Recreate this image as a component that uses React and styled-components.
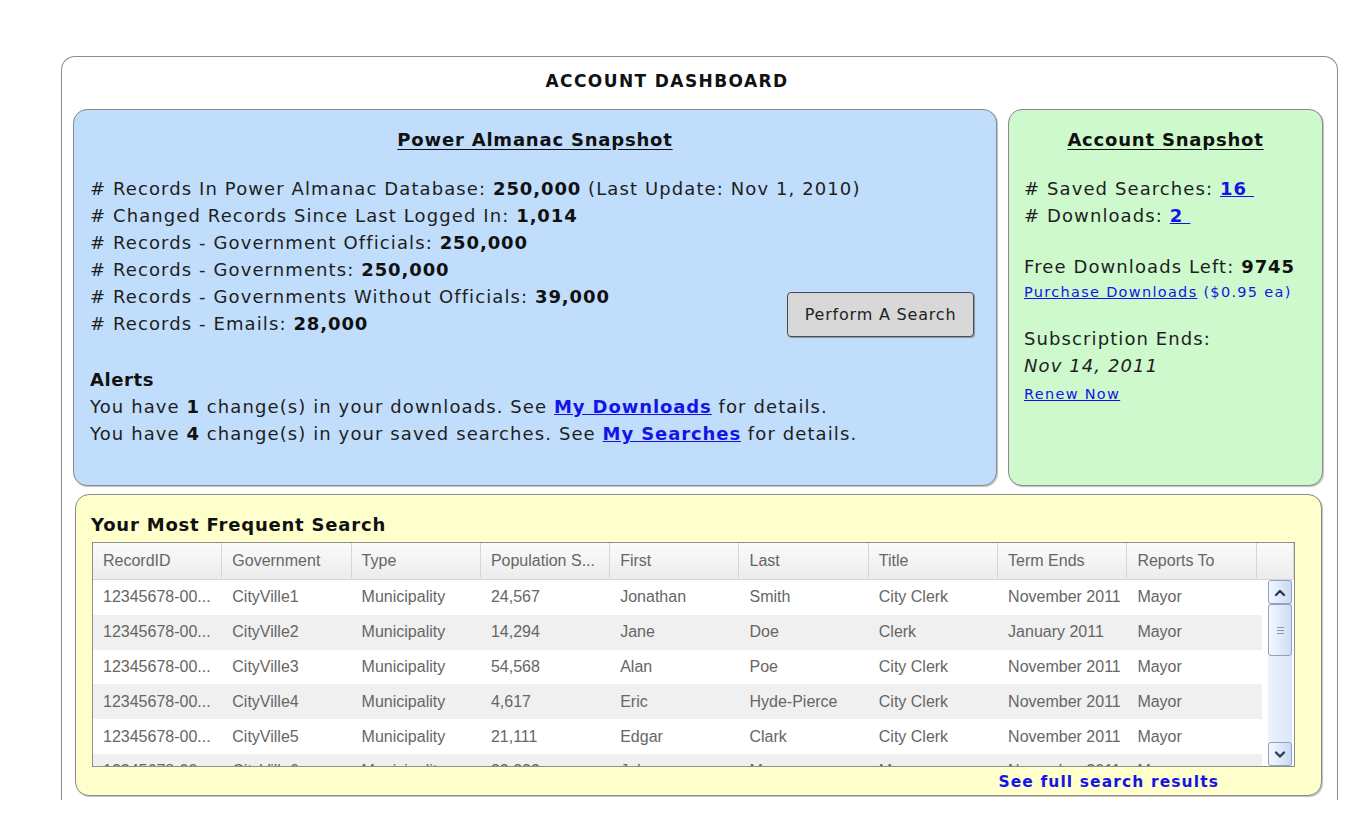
import React from "react";
import styled, { createGlobalStyle } from "styled-components";

const Global = createGlobalStyle`
  html, body { margin: 0; padding: 0; background: #fff; }
  body { font-family: "DejaVu Sans", Verdana, sans-serif; color: #1e1e1e; }
`;

const Page = styled.div`
  padding: 56px 0 0 61px;
  width: 1368px;
  height: 832px;
  box-sizing: border-box;
  overflow: hidden;
`;

const Frame = styled.div`
  width: 1277px;
  height: 744px;
  box-sizing: border-box;
  border: 1px solid #8c8c8c;
  border-bottom: none;
  border-radius: 14px 14px 0 0;
  padding: 0 14px 0 11px;
`;

const Title = styled.h1`
  margin: 0;
  height: 52px;
  padding: 0 62px 4px 0;
  box-sizing: border-box;
  display: flex;
  align-items: center;
  justify-content: center;
  font-size: 17px;
  font-weight: bold;
  letter-spacing: 1.4px;
  color: #111;
`;

const TopRow = styled.div`
  display: grid;
  grid-template-columns: 924px 315px;
  gap: 11px;
`;

const Panel = styled.section`
  box-sizing: border-box;
  height: 377px;
  border: 1px solid #8a8a8a;
  border-radius: 14px;
  background: ${(p) => p.$bg};
  padding: ${(p) => p.$pad};
  box-shadow: 1px 1px 1px rgba(0, 0, 0, 0.25);
`;

const PanelHeading = styled.h2`
  margin: 0 0 22px;
  font-size: 18px;
  line-height: 26px;
  font-weight: bold;
  letter-spacing: 0.8px;
  text-align: center;
  text-decoration: underline;
  text-underline-offset: 3px;
  color: #111;
`;

const Line = styled.div`
  font-size: 18px;
  line-height: 27px;
  letter-spacing: 1.1px;
  white-space: nowrap;
  margin-top: ${(p) => p.$mt || 0}px;
  font-style: ${(p) => (p.$italic ? "italic" : "normal")};
`;

const SmallLine = styled.div`
  font-size: 14.5px;
  line-height: 20px;
  letter-spacing: 1.3px;
  color: #1414e6;
  white-space: nowrap;
  margin-top: ${(p) => p.$mt || 0}px;
`;

const B = styled.b`
  font-weight: bold;
  letter-spacing: 0.9px;
  color: #111;
`;

const Link = styled.a`
  color: #1414e6;
  font-weight: ${(p) => (p.$bold ? "bold" : "normal")};
  letter-spacing: ${(p) => (p.$bold ? "0.9px" : "inherit")};
  text-decoration: underline;
  cursor: pointer;
`;

const StatsRow = styled.div`
  display: flex;
  justify-content: space-between;
  align-items: flex-end;
`;

const SearchButton = styled.button`
  flex-shrink: 0;
  width: 187px;
  height: 45px;
  margin: 0 6px 0 0;
  border: 1px solid #4a4a4a;
  border-radius: 4px;
  background: #d8d8d8;
  font-family: "DejaVu Sans", Verdana, sans-serif;
  font-size: 16px;
  letter-spacing: 0.8px;
  white-space: nowrap;
  color: #222;
  box-shadow: 1px 1px 1px rgba(0, 0, 0, 0.3);
`;

const AlertsTitle = styled.div`
  margin-top: 29px;
  font-size: 18px;
  line-height: 27px;
  font-weight: bold;
  letter-spacing: 0.6px;
  color: #111;
`;

const YellowPanel = styled.section`
  margin: 8px 1px 0 2px;
  box-sizing: border-box;
  height: 302px;
  border: 1px solid #8a8a8a;
  border-radius: 14px;
  background: #ffffcc;
  padding: 18px 26px 2px 16px;
  box-shadow: 1px 1px 1px rgba(0, 0, 0, 0.25);
`;

const SearchHeading = styled.h3`
  margin: 0 0 5px -1px;
  font-size: 18px;
  line-height: 24px;
  font-weight: bold;
  letter-spacing: 0.8px;
  color: #111;
`;

const Grid = styled.div`
  height: 225px;
  box-sizing: border-box;
  border: 1px solid #8e8e8e;
  background: #fff;
  font-family: "Liberation Sans", Arial, sans-serif;
  font-size: 16px;
  color: #666;
  overflow: hidden;
`;

const HeaderRow = styled.div`
  display: grid;
  grid-template-columns: repeat(9, 129.3px) 1fr;
  height: 37px;
  padding-bottom: 1px;
  background: linear-gradient(#fbfbfb, #ececec);
  border-bottom: 1px solid #d4d4d4;
  box-sizing: border-box;
`;

const HeaderCell = styled.div`
  padding-left: 10px;
  display: flex;
  align-items: center;
  border-right: 1px solid #d6d6d6;
  white-space: nowrap;
  overflow: hidden;
`;

const Body = styled.div`
  display: flex;
  height: 186px;
`;

const Rows = styled.div`
  width: 1169px;
  overflow: hidden;
`;

const Row = styled.div`
  display: grid;
  grid-template-columns: repeat(9, 129.3px) 1fr;
  height: 34.8px;
  background: ${(p) => (p.$alt ? "#f0f0f0" : "#fff")};
`;

const Cell = styled.div`
  padding-left: 10px;
  display: flex;
  align-items: center;
  white-space: nowrap;
  overflow: hidden;
`;

const ScrollTrack = styled.div`
  width: 24px;
  margin-left: 6px;
  display: flex;
  flex-direction: column;
  background: linear-gradient(90deg, #eef3fc, #dbe6f7);
`;

const ScrollBtn = styled.div`
  width: 24px;
  height: 24px;
  box-sizing: border-box;
  border: 1px solid #8ea3c4;
  border-radius: 3px;
  background: linear-gradient(90deg, #f4f8ff, #c9d9f2);
  display: flex;
  align-items: center;
  justify-content: center;
`;

const Thumb = styled.div`
  height: 52px;
  box-sizing: border-box;
  border: 1px solid #8ea3c4;
  border-radius: 3px;
  background: linear-gradient(90deg, #f4f8ff, #cfdcf3);
  display: flex;
  align-items: center;
  justify-content: center;
`;

const TrackSpace = styled.div`
  flex: 1;
`;

const Footer = styled.div`
  display: flex;
  justify-content: flex-end;
  padding-right: 76px;
  margin-top: 5px;
`;

const FooterLink = styled.a`
  font-size: 15.5px;
  line-height: 20px;
  font-weight: bold;
  letter-spacing: 1.1px;
  color: #1414e6;
  text-decoration: none;
`;

const columns = ["RecordID", "Government", "Type", "Population S...", "First", "Last", "Title", "Term Ends", "Reports To"];

const data = [
  ["12345678-00...", "CityVille1", "Municipality", "24,567", "Jonathan", "Smith", "City Clerk", "November 2011", "Mayor"],
  ["12345678-00...", "CityVille2", "Municipality", "14,294", "Jane", "Doe", "Clerk", "January 2011", "Mayor"],
  ["12345678-00...", "CityVille3", "Municipality", "54,568", "Alan", "Poe", "City Clerk", "November 2011", "Mayor"],
  ["12345678-00...", "CityVille4", "Municipality", "4,617", "Eric", "Hyde-Pierce", "City Clerk", "November 2011", "Mayor"],
  ["12345678-00...", "CityVille5", "Municipality", "21,111", "Edgar", "Clark", "City Clerk", "November 2011", "Mayor"],
  ["12345678-00...", "CityVille6", "Municipality", "33,333", "John", "Murray", "Mayor", "November 2011", "Mayor"],
];

const Chevron = ({ up }) => (
  <svg width="12" height="9" viewBox="0 0 12 9">
    <path
      d={up ? "M2 7 L6 3 L10 7" : "M2 2.5 L6 6.5 L10 2.5"}
      fill="none"
      stroke="#2b3a55"
      strokeWidth="2.4"
      strokeLinecap="round"
      strokeLinejoin="round"
    />
  </svg>
);

const Grip = () => (
  <svg width="9" height="9" viewBox="0 0 9 9">
    <path d="M1 1.5H8M1 4.5H8M1 7.5H8" stroke="#8898b4" strokeWidth="1" />
  </svg>
);

export default function App() {
  return (
    <Page>
      <Global />
      <Frame>
        <Title>ACCOUNT DASHBOARD</Title>
        <TopRow>
          <Panel $bg="#c0ddfb" $pad="17px 16px">
            <PanelHeading>Power Almanac Snapshot</PanelHeading>
            <Line># Records In Power Almanac Database: <B>250,000</B> (Last Update: Nov 1, 2010)</Line>
            <Line># Changed Records Since Last Logged In: <B>1,014</B></Line>
            <Line># Records - Government Officials: <B>250,000</B></Line>
            <Line># Records - Governments: <B>250,000</B></Line>
            <StatsRow>
              <div>
                <Line># Records - Governments Without Officials: <B>39,000</B></Line>
                <Line># Records - Emails: <B>28,000</B></Line>
              </div>
              <SearchButton>Perform A Search</SearchButton>
            </StatsRow>
            <AlertsTitle>Alerts</AlertsTitle>
            <Line>You have <B>1</B> change(s) in your downloads. See <Link $bold>My Downloads</Link> for details.</Line>
            <Line>You have <B>4</B> change(s) in your saved searches. See <Link $bold>My Searches</Link> for details.</Line>
          </Panel>
          <Panel $bg="#cdf9cd" $pad="17px 15px">
            <PanelHeading>Account Snapshot</PanelHeading>
            <Line># Saved Searches: <Link $bold>16&nbsp;</Link></Line>
            <Line># Downloads: <Link $bold>2&nbsp;</Link></Line>
            <Line $mt={24}>Free Downloads Left: <B>9745</B></Line>
            <SmallLine $mt={2}><Link>Purchase Downloads</Link> ($0.95 ea)</SmallLine>
            <Line $mt={23}>Subscription Ends:</Line>
            <Line $italic>Nov 14, 2011</Line>
            <SmallLine $mt={5}><Link>Renew Now</Link></SmallLine>
          </Panel>
        </TopRow>
        <YellowPanel>
          <SearchHeading>Your Most Frequent Search</SearchHeading>
          <Grid>
            <HeaderRow>
              {columns.map((c) => (
                <HeaderCell key={c}>{c}</HeaderCell>
              ))}
              <HeaderCell />
            </HeaderRow>
            <Body>
              <Rows>
                {data.map((r, i) => (
                  <Row key={i} $alt={i % 2 === 1}>
                    {r.map((v, j) => (
                      <Cell key={j}>{v}</Cell>
                    ))}
                  </Row>
                ))}
              </Rows>
              <ScrollTrack>
                <ScrollBtn><Chevron up /></ScrollBtn>
                <Thumb><Grip /></Thumb>
                <TrackSpace />
                <ScrollBtn><Chevron /></ScrollBtn>
              </ScrollTrack>
            </Body>
          </Grid>
          <Footer>
            <FooterLink>See full search results</FooterLink>
          </Footer>
        </YellowPanel>
      </Frame>
    </Page>
  );
}
